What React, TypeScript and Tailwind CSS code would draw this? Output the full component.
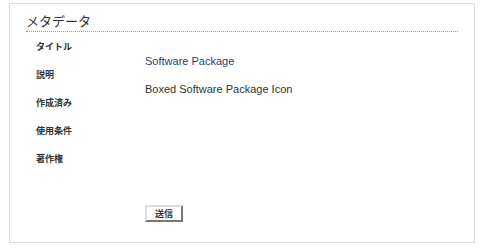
export default function App() {
  const labels = ["タイトル", "説明", "作成済み", "使用条件", "著作権"];
  const values = [
    { t: "Software Package", c: "text-[#2c3a78]" },
    { t: "Boxed Software Package Icon", c: "text-[#333333]" },
  ];
  return (
    <div className="w-[484px] h-[250px] bg-white pt-[3px] pl-[9px]">
      <div className="w-[466px] h-[240px] border border-[#dddddd] px-[16px]">
        <div
          className="pt-[9px] pb-[2px] border-b border-dotted border-[#999999] text-[13px] leading-[16px] text-[#333333]"
          style={{ fontFamily: '"Noto Sans CJK JP", sans-serif' }}
        >
          メタデータ
        </div>
        <div className="flex mt-[1px]">
          <div
            className="w-[119px] pl-[10px] flex flex-col"
            style={{ fontFamily: '"Noto Sans CJK JP", sans-serif' }}
          >
            {labels.map((l) => (
              <div key={l} className="h-[28px] flex items-center text-[9px] font-bold text-[#333333]">
                {l}
              </div>
            ))}
          </div>
          <div className="flex flex-col pt-[14px]" style={{ fontFamily: '"Liberation Sans", sans-serif' }}>
            {values.map((v) => (
              <div key={v.t} className={`h-[28px] flex items-center text-[11px] ${v.c}`}>
                {v.t}
              </div>
            ))}
            <div className="mt-[102px]">
              <button
                className="w-[38px] h-[17px] bg-white border-2 border-t-[#dddddd] border-l-[#dddddd] border-r-[#777777] border-b-[#777777] text-[9px] font-bold text-[#333333] flex items-center justify-center"
                style={{ fontFamily: '"Noto Sans CJK JP", sans-serif' }}
              >
                送信
              </button>
            </div>
          </div>
        </div>
      </div>
    </div>
  );
}
